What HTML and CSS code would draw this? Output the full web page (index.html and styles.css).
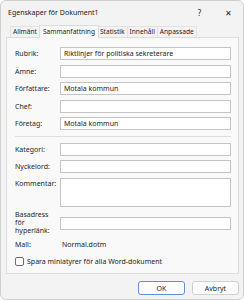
FILE: index.html
```html
<!DOCTYPE html>
<html lang="sv">
<head>
    <meta charset="UTF-8">
    <title>Egenskaper för Dokument1</title>
    <link rel="stylesheet" href="styles.css">
</head>
<body>
    <div class="window">
        <div class="titlebar">
            <span class="title">Egenskaper för Dokument1</span>
            <span class="help">?</span>
            <span class="close">✕</span>
        </div>

        <div class="tabs">
            <div class="tab">Allmänt</div>
            <div class="tab active">Sammanfattning</div>
            <div class="tab">Statistik</div>
            <div class="tab">Innehåll</div>
            <div class="tab">Anpassade</div>
        </div>

        <div class="panel">
            <div class="form">
                <label class="label">Rubrik:</label>
                <div class="field">Riktlinjer för politiska sekreterare</div>

                <label class="label">Ämne:</label>
                <div class="field"></div>

                <label class="label">Författare:</label>
                <div class="field">Motala kommun</div>

                <label class="label">Chef:</label>
                <div class="field"></div>

                <label class="label">Företag:</label>
                <div class="field">Motala kommun</div>

                <div class="separator"></div>

                <label class="label">Kategori:</label>
                <div class="field"></div>

                <label class="label">Nyckelord:</label>
                <div class="field"></div>

                <label class="label top">Kommentar:</label>
                <div class="field area"></div>

                <label class="label multi">Basadress<br>för<br>hyperlänk:</label>
                <div class="field"></div>

                <span class="label">Mall:</span>
                <span class="value">Normal.dotm</span>
            </div>

            <div class="check-row">
                <span class="checkbox"></span>
                <span>Spara miniatyrer för alla Word-dokument</span>
            </div>
        </div>

        <div class="buttons">
            <button class="button default">OK</button>
            <button class="button">Avbryt</button>
        </div>
    </div>
</body>
</html>
```

FILE: styles.css
```css
* {
    margin: 0;
    padding: 0;
    box-sizing: border-box;
}

body {
    font-family: "Segoe UI", "Noto Sans", sans-serif;
    font-size: 7px;
    color: #1b1b1b;
    background: #ffffff;
}

.window {
    width: 244px;
    height: 300px;
    background: #f3f3f3;
    border: 1px solid #cfcfcf;
    border-radius: 6px;
    overflow: hidden;
}

.titlebar {
    height: 23px;
    display: flex;
    align-items: center;
    padding: 0 0 1px 7px;
}

.title {
    flex: 1;
    font-size: 7px;
}

.help {
    font-size: 8px;
    width: 29px;
    text-align: center;
}

.close {
    font-size: 8px;
    width: 29px;
    text-align: center;
}

.tabs {
    display: flex;
    height: 13px;
    padding-left: 9px;
    align-items: flex-end;
    font-size: 6.6px;
}

.tab {
    height: 11px;
    padding: 0 2px;
    line-height: 10px;
    border: 1px solid #e2e2e2;
    border-bottom: none;
    border-left: none;
    background: #f3f3f3;
}

.tab:first-child {
    border-left: 1px solid #e2e2e2;
}

.tab.active {
    height: 13px;
    line-height: 12px;
    padding: 0 3px;
    background: #f9f9f9;
    border-left: 1px solid #dcdcdc;
    border-color: #dcdcdc;
    margin: 0 -1px -1px -1px;
    position: relative;
}

.panel {
    margin: 0 4px 0 5px;
    height: 237px;
    background: #f9f9f9;
    border: 1px solid #dcdcdc;
    padding: 9px 7px 0 8px;
}

.form {
    display: grid;
    grid-template-columns: 45px 1fr;
    row-gap: 4.6px;
    align-items: center;
}

.label {
    line-height: 9px;
    color: #262626;
}

.label.top {
    align-self: start;
    padding-top: 1px;
}

.label.multi {
    line-height: 8px;
}

.field {
    height: 13px;
    background: #ffffff;
    border: 1px solid #c4c4c4;
    padding: 0 3px;
    line-height: 11px;
    white-space: nowrap;
    overflow: hidden;
}

.field.area {
    height: 29px;
}

.value {
    padding-left: 2px;
    line-height: 9px;
}

.separator {
    grid-column: 1 / 3;
    height: 1px;
    background: #dedede;
    margin: 1px 0;
}

.check-row {
    display: flex;
    align-items: center;
    gap: 3px;
    margin-top: 8px;
}

.checkbox {
    width: 9px;
    height: 9px;
    border: 1px solid #6e6e6e;
    border-radius: 2px;
    background: #fdfdfd;
}

.buttons {
    display: flex;
    justify-content: flex-end;
    gap: 7px;
    padding: 7px 4px 0 0;
}

.button {
    width: 47px;
    height: 14px;
    font-family: inherit;
    font-size: 7px;
    color: #1b1b1b;
    background: #fdfdfd;
    border: 1px solid #d0d0d0;
    border-radius: 3px;
}

.button.default {
    border: 1px solid #5b8ed6;
    box-shadow: inset 0 0 0 1px #ffffff;
}
```
